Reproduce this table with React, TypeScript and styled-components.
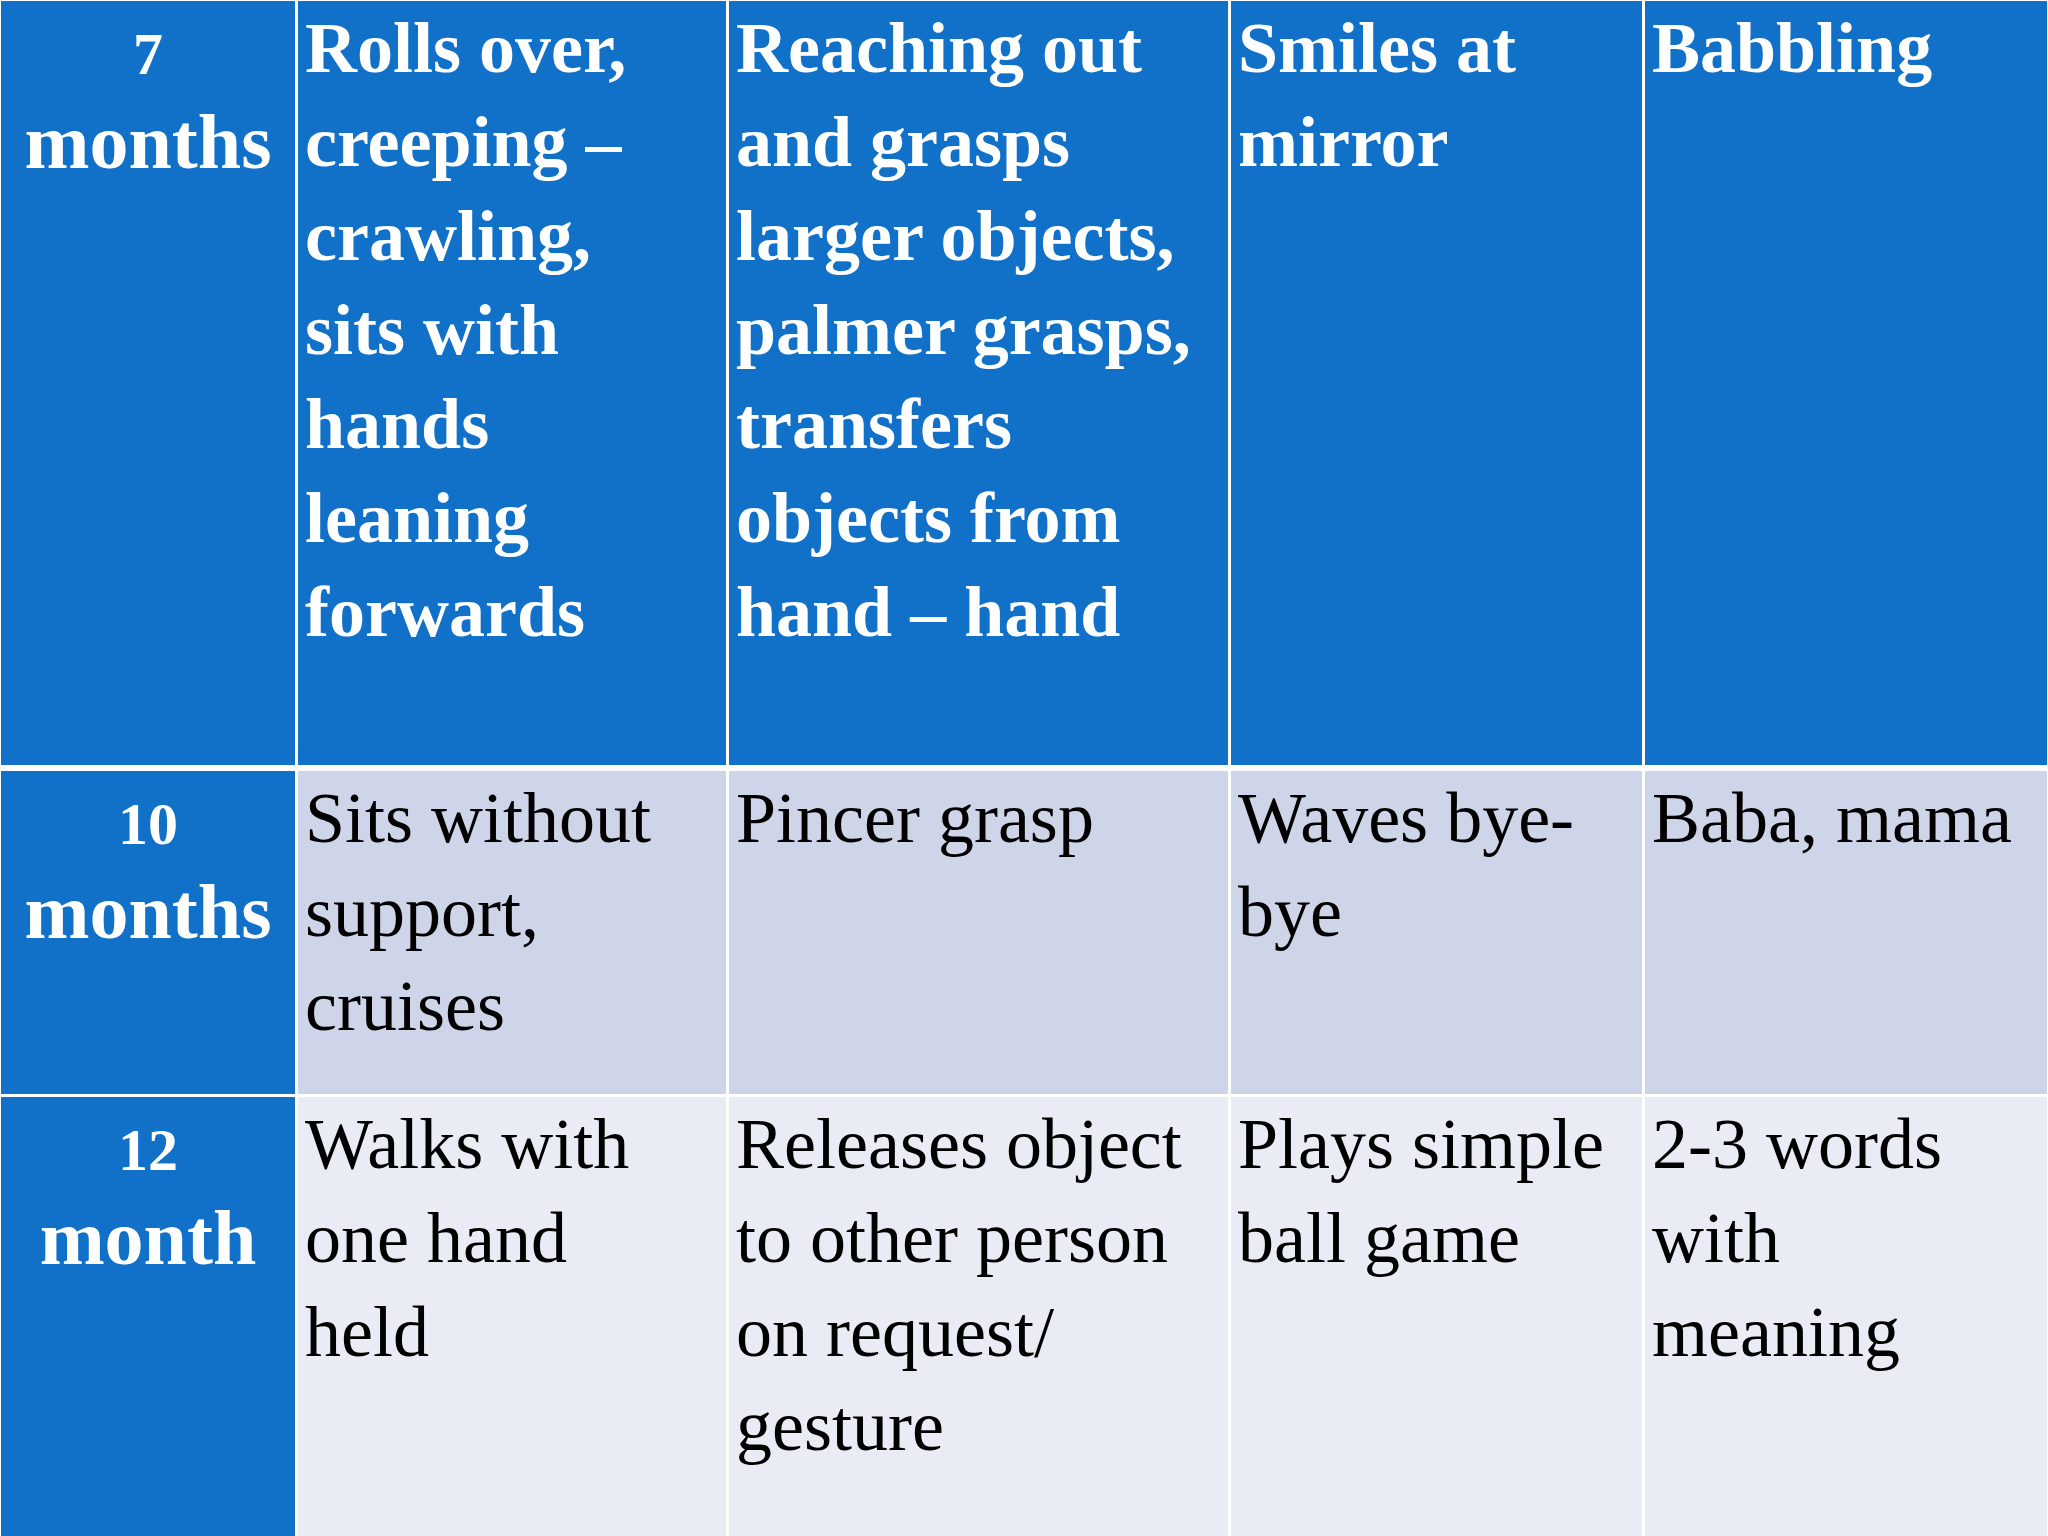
import styled, { createGlobalStyle } from "styled-components";

type Band = "header" | "even" | "odd";

type Milestone = {
    ageNumber: string;
    ageUnit: string;
    gross: string[];
    fine: string[];
    social: string[];
    language: string[];
    band: Band;
    height: number;
};

const milestones: Milestone[] = [
    {
        ageNumber: "7",
        ageUnit: "months",
        gross: ["Rolls over,", "creeping –", "crawling,", "sits with", "hands", "leaning", "forwards"],
        fine: ["Reaching out", "and grasps", "larger objects,", "palmer grasps,", "transfers", "objects from", "hand – hand"],
        social: ["Smiles at", "mirror"],
        language: ["Babbling"],
        band: "header",
        height: 764,
    },
    {
        ageNumber: "10",
        ageUnit: "months",
        gross: ["Sits without", "support,", "cruises"],
        fine: ["Pincer grasp"],
        social: ["Waves bye-", "bye"],
        language: ["Baba, mama"],
        band: "even",
        height: 323,
    },
    {
        ageNumber: "12",
        ageUnit: "month",
        gross: ["Walks with", "one hand", "held"],
        fine: ["Releases object", "to other person", "on request/", "gesture"],
        social: ["Plays simple", "ball game"],
        language: ["2-3 words", "with", "meaning"],
        band: "odd",
        height: 439,
    },
];

const bandColors: Record<Band, string> = {
    header: "#1170c8",
    even: "#cfd5e8",
    odd: "#e9ebf5",
};

function Lines({ lines }: { lines: string[] }) {
    return (
        <>
            {lines.map((line, i) => (
                <Line key={i}>{line}</Line>
            ))}
        </>
    );
}

function App() {
    return (
        <>
            <GlobalStyle />
            <Table>
                {milestones.map((m, i) => (
                    <Row key={i} $height={m.height} $gapAbove={i === 0 ? 0 : i === 1 ? 6 : 3}>
                        <AgeCell>
                            <AgeNumber>{m.ageNumber}</AgeNumber>
                            <Line>{m.ageUnit}</Line>
                        </AgeCell>
                        <Cell $band={m.band}>
                            <Lines lines={m.gross} />
                        </Cell>
                        <Cell $band={m.band}>
                            <Lines lines={m.fine} />
                        </Cell>
                        <Cell $band={m.band}>
                            <Lines lines={m.social} />
                        </Cell>
                        <Cell $band={m.band}>
                            <Lines lines={m.language} />
                        </Cell>
                    </Row>
                ))}
            </Table>
        </>
    );
}

const GlobalStyle = createGlobalStyle`
    html, body {
        margin: 0;
        padding: 0;
        background: #ffffff;
    }
`;

const Table = styled.div`
    width: 2048px;
    height: 1536px;
    box-sizing: border-box;
    padding: 1px 1px 0 1px;
    display: flex;
    flex-direction: column;
    background: #ffffff;
    font-family: "Liberation Serif", "DejaVu Serif", serif;
    font-size: 72px;
    line-height: 94px;
`;

const Row = styled.div<{ $height: number; $gapAbove: number }>`
    display: grid;
    grid-template-columns: 294px 428px 499px 411px 1fr;
    column-gap: 3px;
    height: ${p => p.$height}px;
    margin-top: ${p => p.$gapAbove}px;
    flex-shrink: 0;
`;

const AgeCell = styled.div`
    background: ${bandColors.header};
    color: #ffffff;
    font-weight: bold;
    font-size: 78px;
    text-align: center;
`;

const AgeNumber = styled.div`
    font-size: 60px;
    line-height: 94px;
    padding-top: 6px;
    margin-bottom: -6px;
`;

const Cell = styled.div<{ $band: Band }>`
    background: ${p => bandColors[p.$band]};
    color: ${p => (p.$band === "header" ? "#ffffff" : "#000000")};
    font-weight: ${p => (p.$band === "header" ? "bold" : "normal")};
    padding: 0 0 0 7px;
`;

const Line = styled.div`
    white-space: nowrap;
`;

export default App;
